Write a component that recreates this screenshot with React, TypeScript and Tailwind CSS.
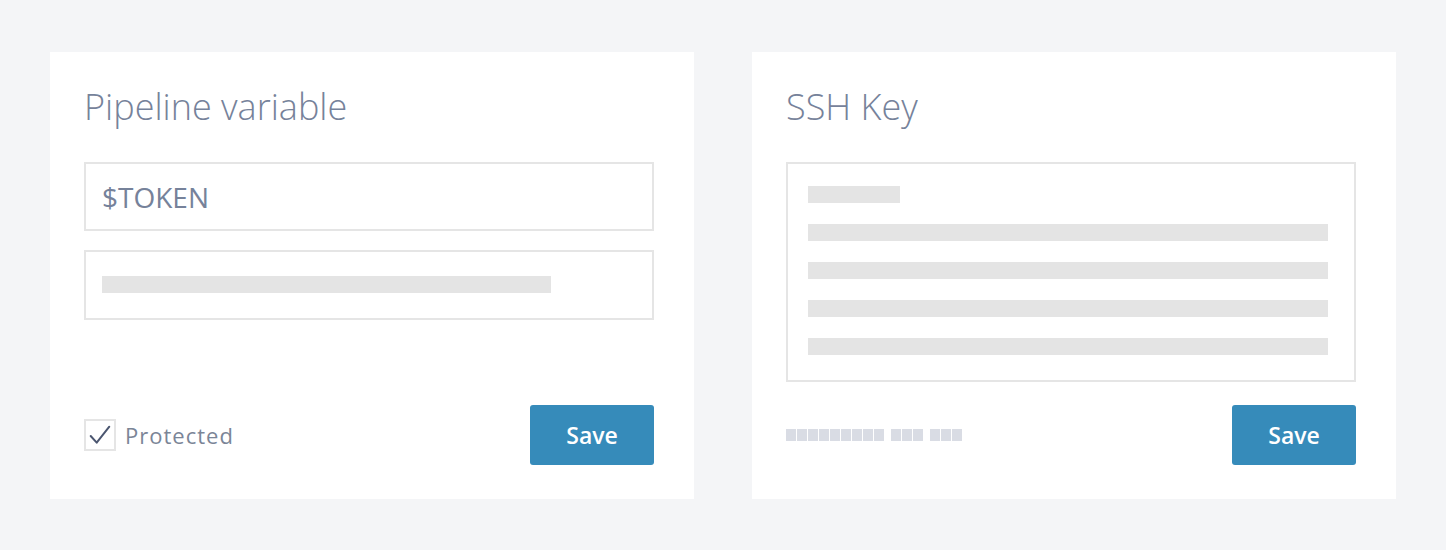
import React from 'react'

const font = { fontFamily: '"Open Sans", "Liberation Sans", sans-serif' }

function SaveButton() {
  return (
    <button className="h-[60px] w-[124px] rounded-[3px] bg-[#368bba] text-[23px] font-semibold leading-none text-white">
      Save
    </button>
  )
}

function Redacted({ count }: { count: number }) {
  return (
    <div className="flex gap-px">
      {Array.from({ length: count }).map((_, i) => (
        <span key={i} className="block h-[12px] w-[10px] bg-[#d9dce4]" />
      ))}
    </div>
  )
}

export default function App() {
  return (
    <div className="flex h-[550px] w-[1446px] gap-[58px] bg-[#f4f5f7] pl-[50px] pt-[52px]" style={font}>
      {/* Pipeline variable card */}
      <div className="flex h-[447px] w-[644px] flex-col bg-white pb-[34px] pl-[34px] pr-[40px] pt-[31px]">
        <h2 className="text-[36px] font-light leading-[48px] text-[#76829a]">Pipeline variable</h2>
        <div className="mt-[31px] flex h-[69px] items-center border-2 border-[#e5e5e5] px-4">
          <span className="text-[28px] leading-[38px] text-[#76829a]">$TOKEN</span>
        </div>
        <div className="mt-[19px] h-[70px] border-2 border-[#e5e5e5] px-4 pt-[24px]">
          <div className="h-[17px] w-[449px] bg-[#e4e4e4]" />
        </div>
        <div className="mt-auto flex items-center justify-between">
          <label className="flex items-center gap-[9px]">
            <span className="flex h-[32px] w-[32px] items-center justify-center border-2 border-[#e5e5e5]">
              <svg width="28" height="28" viewBox="0 0 28 28" fill="none">
                <polyline points="4.7,15 10.7,21.7 23.3,5.7" stroke="#4b5670" strokeWidth="2" strokeLinecap="round" strokeLinejoin="round" />
              </svg>
            </span>
            <span className="text-[22px] tracking-[1px] text-[#7b8597]">Protected</span>
          </label>
          <SaveButton />
        </div>
      </div>

      {/* SSH Key card */}
      <div className="flex h-[447px] w-[644px] flex-col bg-white pb-[34px] pl-[34px] pr-[40px] pt-[31px]">
        <h2 className="text-[36px] font-light leading-[48px] text-[#76829a]">SSH Key</h2>
        <div className="mt-[31px] flex h-[220px] flex-col gap-[21px] border-2 border-[#e5e5e5] pl-[20px] pt-[22px]">
          <div className="h-[17px] w-[92px] bg-[#e4e4e4]" />
          <div className="h-[17px] w-[520px] bg-[#e4e4e4]" />
          <div className="h-[17px] w-[520px] bg-[#e4e4e4]" />
          <div className="h-[17px] w-[520px] bg-[#e4e4e4]" />
          <div className="h-[17px] w-[520px] bg-[#e4e4e4]" />
        </div>
        <div className="mt-auto flex items-center justify-between">
          <div className="flex gap-[7px]">
            <Redacted count={9} />
            <Redacted count={3} />
            <Redacted count={3} />
          </div>
          <SaveButton />
        </div>
      </div>
    </div>
  )
}
